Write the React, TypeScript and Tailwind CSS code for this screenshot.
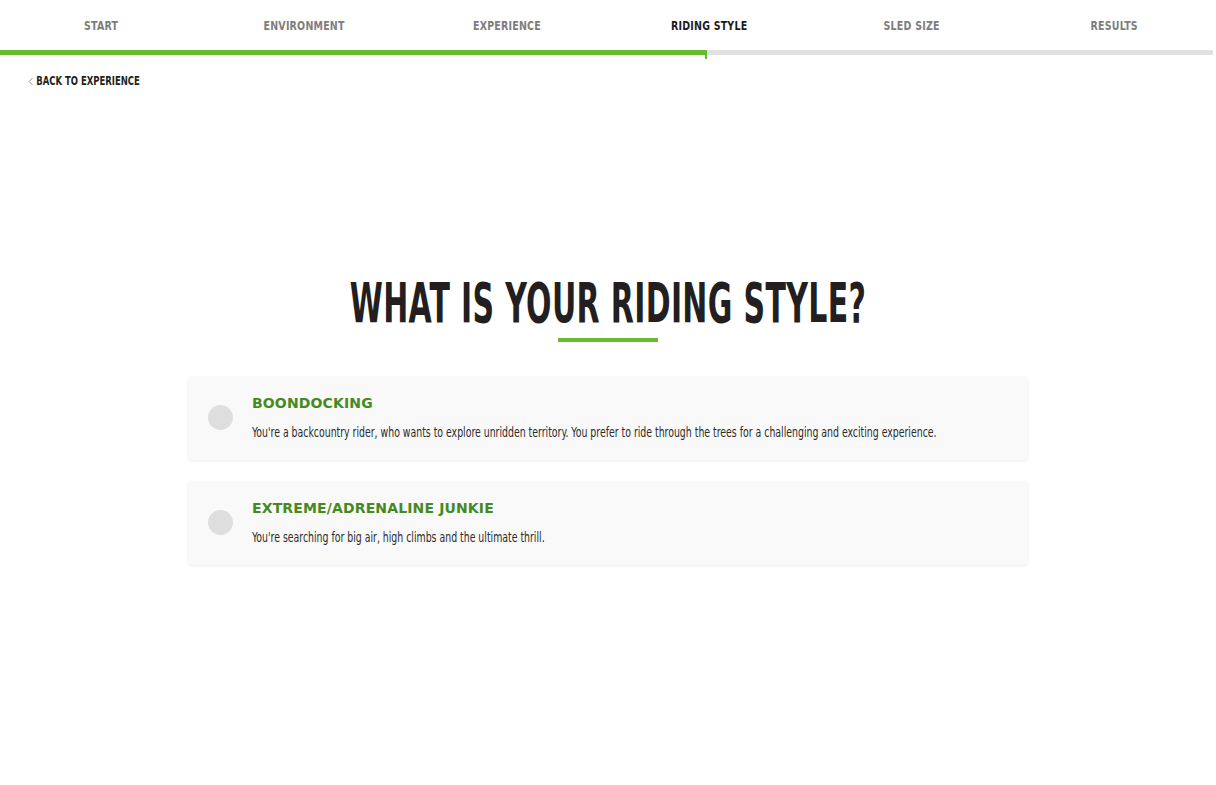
import React, { useState } from 'react';

const STEPS = ['Start', 'Environment', 'Experience', 'Riding Style', 'Sled Size', 'Results'];
const ACTIVE = 3;

const OPTIONS = [
  {
    id: 'boondocking',
    title: 'Boondocking',
    text: "You're a backcountry rider, who wants to explore unridden territory. You prefer to ride through the trees for a challenging and exciting experience.",
  },
  {
    id: 'extreme',
    title: 'Extreme/Adrenaline Junkie',
    text: "You're searching for big air, high climbs and the ultimate thrill.",
  },
];

const narrow = "font-['DejaVu_Sans_Condensed','DejaVu_Sans',sans-serif]";

export default function App() {
  const [selected, setSelected] = useState<string | null>(null);

  return (
    <div className="min-h-[785px] bg-white text-[#231f20]">
      {/* Step tabs */}
      <nav className="grid grid-cols-6 h-[50px] items-center">
        {STEPS.map((s, i) => (
          <div key={s} className="flex justify-center">
            <span
              className={`${narrow} inline-block scale-x-[0.81] whitespace-nowrap text-[13px] font-bold uppercase tracking-[0.02em] pt-[1px] ${i === ACTIVE ? 'text-[#1c1c1c]' : 'text-[#7d7d7d]'}`}
            >
              {s}
            </span>
          </div>
        ))}
      </nav>

      {/* Progress */}
      <div className="relative flex h-[5px] pr-[3px]">
        <div className="w-[706px] bg-[#66bb2f]" />
        <div className="flex-1 bg-[#e1e1e1]" />
        <div className="absolute left-[705px] top-0 h-[9px] w-[2px] bg-[#66bb2f]" />
      </div>

      <a href="#" className={`${narrow} ml-[28px] mt-[18px] inline-flex origin-left scale-x-[0.82] items-center gap-[3px] whitespace-nowrap text-[11.5px] font-bold uppercase text-[#231f20]`}>
        <svg width="7" height="9" viewBox="0 0 7 9" className="mb-[1px]">
          <path d="M5.5 1 L1.5 4.5 L5.5 8" fill="none" stroke="#8a8a8a" strokeWidth="1" />
        </svg>
        Back to Experience
      </a>

      <main className="flex flex-col items-center pt-[183px]">
        <h1 className={`${narrow} text-[56px] leading-none font-bold uppercase tracking-[0.01em] scale-x-[0.595] whitespace-nowrap`}>
          What is your riding style?
        </h1>
        <div className="mt-[7px] h-[4px] w-[100px] bg-[#66bb2f]" />

        <div className="mt-[34px] flex w-[840px] flex-col gap-[21px]">
          {OPTIONS.map((o) => (
            <button
              key={o.id}
              onClick={() => setSelected(o.id)}
              className="flex h-[84px] items-center gap-[19px] rounded-[2px] bg-[#f9f9f9] pl-[20px] text-left shadow-[0_1px_3px_rgba(0,0,0,0.08)]"
            >
              <span className={`h-[25px] w-[25px] shrink-0 rounded-full ${selected === o.id ? 'bg-[#66bb2f]' : 'bg-[#dedede]'}`} />
              <span className="flex flex-col">
                <span className="font-['DejaVu_Sans',sans-serif] text-[14px] font-bold uppercase tracking-[0.01em] text-[#458a20]">
                  {o.title}
                </span>
                <span className={`${narrow} mt-[8px] inline-block origin-left scale-x-[0.743] whitespace-nowrap text-[14px] text-[#2b2b2b]`}>{o.text}</span>
              </span>
            </button>
          ))}
        </div>
      </main>
    </div>
  );
}
